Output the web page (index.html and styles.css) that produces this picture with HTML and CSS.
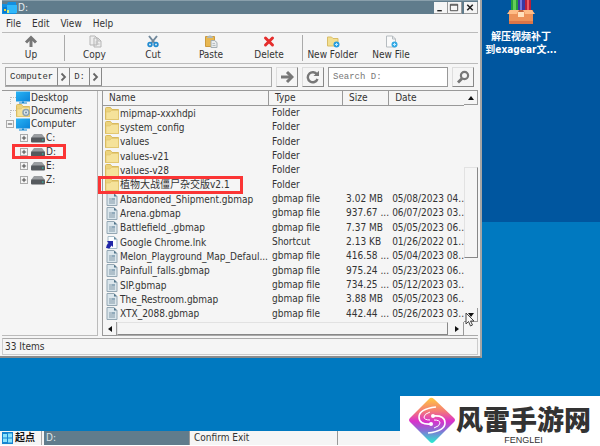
FILE: index.html
```html
<!DOCTYPE html>
<html lang="zh-CN">
<head>
    <meta charset="UTF-8">
    <meta name="viewport" content="width=device-width, initial-scale=1.0">
    <title>D:</title>
    <link rel="stylesheet" href="styles.css">
</head>
<body>
    <!-- shared icons -->
    <svg class="sprite" aria-hidden="true">
        <linearGradient id="screenFill" x1="0" y1="0" x2="1" y2="1">
            <stop offset="0" stop-color="#28b4f5"/><stop offset="1" stop-color="#0a83d8"/>
        </linearGradient>
        <symbol id="folder" viewBox="0 0 14 13">
            <path d="M.5 12.5V1.5q0-1 1-1h4l1.5 2h6.500v10z" fill="#ecd37c" stroke="#d9b95c"/>
            <path d="M1 12.500V5h4l1.500-1.500h7v9z" fill="#f5e29a" stroke="#dfc36b" stroke-width=".6"/>
        </symbol>
        <symbol id="doc" viewBox="0 0 12 13">
            <path d="M1 .5h7l3 3v9H1z" fill="#dbe6ec" stroke="#94a7b3"/>
            <path d="M8 .5v3h3z" fill="#52768a"/>
            <path d="M3 6h3M3 8h6M3 10h6" stroke="#8299a8"/>
            <path d="M6 5h3v2H6z" fill="#90aabb"/>
        </symbol>
        <symbol id="link" viewBox="0 0 12 13">
            <path d="M2 .5h6l3 3v9H2z" fill="#fbfdff" stroke="#a5bac6"/>
            <path d="M8 .5v3h3z" fill="#668b9f"/>
            <path d="M1 5h6v6L5.500 9.500 3.500 12.500 0 12q0-3 2.500-5z" fill="#2226a8"/>
        </symbol>
        <symbol id="screen" viewBox="0 0 14 12">
            <path d="M0 0h14v10H0z" fill="url(#screenFill)"/>
            <path d="M6 10h2v1h3v1H3v-1h3z" fill="#1688d2"/>
        </symbol>
        <symbol id="drive" viewBox="0 0 14 9">
            <path d="M3 0h8l3 4H0z" fill="#9a9da0"/>
            <rect y="3.500" width="14" height="5" rx="1" fill="#55595d"/>
            <path d="M11 6h1.500" stroke="#28d0ba"/>
        </symbol>
    </svg>

    <div class="desktop">
        <main class="window">
            <header class="titlebar">
                <svg class="title-icon" viewBox="0 0 15 12"><path d="M0 2h5l1-2h8v12H0z" fill="#128fe0"/><path d="M5 3h10v8H5z" fill="#30b8fa"/><path d="M1 5h4v6H1z" fill="#087bd0"/><path d="M2 7h2v2H2z" fill="#f3d536"/><path d="M5 8h2v3H5z" fill="#d7ef81"/></svg>
                <span class="title">D:</span>
                <button class="win-btn" aria-label="Minimize"><svg viewBox="0 0 12 12"><path d="M3 9.500h5" stroke="#222" stroke-width="1.500"/></svg></button>
                <button class="win-btn" aria-label="Maximize"><svg viewBox="0 0 12 12"><path d="M2 2.500h8v7H2z M2 3.500h8" fill="none" stroke="#444"/></svg></button>
                <button class="win-btn close" aria-label="Close"><svg viewBox="0 0 12 12"><path d="M3 3l6 6M9 3L3 9" stroke="#222" stroke-width="1.700"/></svg></button>
            </header>

            <nav class="menu">
                <button>File</button>
                <button>Edit</button>
                <button>View</button>
                <button>Help</button>
            </nav>

            <div class="toolbar">
                <button class="tool">
                    <svg viewBox="0 0 14 13"><path d="M7 12V4" stroke="#777" stroke-width="3"/><path d="M2 7.500l5-5 5 5" fill="none" stroke="#777" stroke-width="3"/></svg>
                    Up
                </button>
                <button class="tool split">
                    <svg viewBox="0 0 14 13"><path d="M2 1h5l2 2v7H2zM6 3h4l3 3v6H6z" fill="#eee" stroke="#b5b5b5"/><path d="M10 3v3h3M7.500 7H10M7.500 9h4" fill="none" stroke="#bbb"/></svg>
                    Copy
                </button>
                <button class="tool">
                    <svg viewBox="0 0 14 13"><path d="M3 1l6 7.500M11 1L5 8.500" stroke="#71889b" stroke-width="2"/><circle cx="4" cy="9.500" r="1.800" fill="none" stroke="#228bd0" stroke-width="1.800"/><circle cx="10" cy="9.500" r="1.800" fill="none" stroke="#228bd0" stroke-width="1.800"/></svg>
                    Cut
                </button>
                <button class="tool">
                    <svg viewBox="0 0 14 13"><path d="M1.500 1.500h9v10h-9z" fill="#e8b750" stroke="#cc9a3c"/><path d="M3 3V1.500h1L5 .5h2l1 1h1V3z" fill="#aeb9bd"/><path d="M7 5.500h3.500l2.500 2v5H7z" fill="#e9eced" stroke="#a4afb5"/><path d="M8.500 8.500H11M8.500 10.500h3" stroke="#b6bec2"/></svg>
                    Paste
                </button>
                <button class="tool">
                    <svg viewBox="0 0 14 13"><path d="M3.500 3l7 7M10.500 3l-7 7" stroke="#e52e2d" stroke-width="3" stroke-linecap="round"/></svg>
                    Delete
                </button>
                <button class="tool split">
                    <svg viewBox="0 0 14 13"><path d="M1.500 11V2h4L7 3.500h5V11z" fill="#f2df91" stroke="#d9bd67"/><circle cx="10.500" cy="9.500" r="3" fill="#259ce0"/><path d="M9 9.500h3M10.500 8v3" stroke="#bfeaff"/></svg>
                    New Folder
                </button>
                <button class="tool">
                    <svg viewBox="0 0 14 13"><path d="M2.500 1h6l3 3v8h-9z" fill="#fafafa" stroke="#b6bcc0"/><path d="M8.500 1v3h3" fill="none" stroke="#b6bcc0"/><circle cx="10.500" cy="9.500" r="3" fill="#34a9e4"/><path d="M9 9.500h3M10.500 8v3" stroke="#c5ebff"/></svg>
                    New File
                </button>
            </div>

            <div class="address">
                <div class="path">
                    <button class="crumb">Computer</button>
                    <button class="crumb chevron" aria-label="Computer folders"><svg viewBox="0 0 8 10"><path d="M2 1.500L5.500 5 2 8.500" fill="none" stroke="#666" stroke-width="1.800"/></svg></button>
                    <button class="crumb">D:</button>
                    <button class="crumb chevron" aria-label="D: folders"><svg viewBox="0 0 8 10"><path d="M2 1.500L5.500 5 2 8.500" fill="none" stroke="#666" stroke-width="1.800"/></svg></button>
                </div>
                <button class="square" aria-label="Go"><svg viewBox="0 0 14 14"><path d="M1 7h9" stroke="#777" stroke-width="3"/><path d="M7 2l5 5-5 5" fill="none" stroke="#777" stroke-width="3"/></svg></button>
                <button class="square" aria-label="Refresh"><svg viewBox="0 0 14 14"><path d="M11 4.500A5 5 0 1 0 11.500 9" fill="none" stroke="#777" stroke-width="2.400"/><path d="M7.500 6H13V.8z" fill="#777"/></svg></button>
                <input class="search" type="text" aria-label="Search D:" placeholder="Search D:">
                <button class="square" aria-label="Search"><svg viewBox="0 0 14 14"><circle cx="8.500" cy="5.500" r="3.600" fill="none" stroke="#777" stroke-width="2.200"/><path d="M6 8.500l-4 4" stroke="#777" stroke-width="2.800"/></svg></button>
            </div>

            <div class="panes">
                <ul class="tree">
                    <li class="leaf"><svg class="pic"><use href="#screen"/></svg>Desktop</li>
                    <li class="leaf"><svg class="pic" viewBox="0 0 14 13"><use href="#folder" width="14" height="13"/><circle cx="10" cy="8.500" r="3" fill="#dbe6ed" stroke="#8ba2b3" stroke-width="1.500"/><circle cx="10" cy="8.500" r="1" fill="#708da3"/></svg>Documents</li>
                    <li class="root"><button class="expand" aria-label="Collapse Computer"><svg viewBox="0 0 7 7"><path d="M1 3.500h5" stroke="#333"/></svg></button><svg class="pic"><use href="#screen"/></svg>Computer</li>
                    <li class="sub"><button class="expand" aria-label="Expand C:"><svg viewBox="0 0 7 7"><path d="M1 3.500h5M3.500 1v5" stroke="#333"/></svg></button><svg class="pic"><use href="#drive"/></svg>C:</li>
                    <li class="sub"><button class="expand" aria-label="Expand D:"><svg viewBox="0 0 7 7"><path d="M1 3.500h5M3.500 1v5" stroke="#333"/></svg></button><svg class="pic"><use href="#drive"/></svg>D:<span class="mark mark-drive"></span></li>
                    <li class="sub"><button class="expand" aria-label="Expand E:"><svg viewBox="0 0 7 7"><path d="M1 3.500h5M3.500 1v5" stroke="#333"/></svg></button><svg class="pic"><use href="#drive"/></svg>E:</li>
                    <li class="sub"><button class="expand" aria-label="Expand Z:"><svg viewBox="0 0 7 7"><path d="M1 3.500h5M3.500 1v5" stroke="#333"/></svg></button><svg class="pic"><use href="#drive"/></svg>Z:</li>
                </ul>

                <section class="list">
                    <div class="list-body">
                        <table class="files">
                            <thead>
                                <tr><th class="col-name">Name</th><th class="col-type">Type</th><th class="col-size">Size</th><th>Date</th></tr>
                            </thead>
                            <tbody>
                                <tr><td><svg class="pic"><use href="#folder"/></svg>mipmap-xxxhdpi</td><td>Folder</td><td></td><td></td></tr>
                                <tr><td><svg class="pic"><use href="#folder"/></svg>system_config</td><td>Folder</td><td></td><td></td></tr>
                                <tr><td><svg class="pic"><use href="#folder"/></svg>values</td><td>Folder</td><td></td><td></td></tr>
                                <tr><td><svg class="pic"><use href="#folder"/></svg>values-v21</td><td>Folder</td><td></td><td></td></tr>
                                <tr><td><svg class="pic"><use href="#folder"/></svg>values-v28</td><td>Folder</td><td></td><td></td></tr>
                                <tr><td class="marked"><svg class="pic"><use href="#folder"/></svg>植物大战僵尸杂交版v2.1<span class="mark mark-folder"></span></td><td>Folder</td><td></td><td></td></tr>
                                <tr><td><svg class="pic"><use href="#doc"/></svg>Abandoned_Shipment.gbmap</td><td>gbmap file</td><td>3.02 MB</td><td>05/08/2023 04..</td></tr>
                                <tr><td><svg class="pic"><use href="#doc"/></svg>Arena.gbmap</td><td>gbmap file</td><td>937.67 ...</td><td>06/07/2023 03..</td></tr>
                                <tr><td><svg class="pic"><use href="#doc"/></svg>Battlefield_.gbmap</td><td>gbmap file</td><td>7.37 MB</td><td>05/05/2023 06..</td></tr>
                                <tr><td><svg class="pic"><use href="#link"/></svg>Google Chrome.lnk</td><td>Shortcut</td><td>2.13 KB</td><td>01/26/2022 01..</td></tr>
                                <tr><td><svg class="pic"><use href="#doc"/></svg>Melon_Playground_Map_Defaul...</td><td>gbmap file</td><td>416.58 ...</td><td>05/04/2023 08..</td></tr>
                                <tr><td><svg class="pic"><use href="#doc"/></svg>Painfull_falls.gbmap</td><td>gbmap file</td><td>975.24 ...</td><td>05/23/2023 06..</td></tr>
                                <tr><td><svg class="pic"><use href="#doc"/></svg>SIP.gbmap</td><td>gbmap file</td><td>734.25 ...</td><td>05/12/2023 03..</td></tr>
                                <tr><td><svg class="pic"><use href="#doc"/></svg>The_Restroom.gbmap</td><td>gbmap file</td><td>3.88 MB</td><td>05/05/2023 06..</td></tr>
                                <tr><td><svg class="pic"><use href="#doc"/></svg>XTX_2088.gbmap</td><td>gbmap file</td><td>442.44 ...</td><td>05/26/2023 03..</td></tr>
                            </tbody>
                        </table>
                        <div class="vscroll">
                            <button class="arrow" aria-label="Scroll up"><svg viewBox="0 0 8 8"><path d="M1 6l3-4 3 4z"/></svg></button>
                            <div class="before"></div>
                            <div class="thumb"></div>
                            <div class="after"></div>
                            <button class="arrow" aria-label="Scroll down"><svg viewBox="0 0 8 8"><path d="M1 2h6L4 6z"/></svg></button>
                            <svg class="cursor" viewBox="0 0 10 15"><path d="M1 1v11l2.500-2.500L5.500 14l2-1-2-4H9z" fill="#f8f8f8" stroke="#444"/></svg>
                        </div>
                    </div>
                    <div class="hscroll">
                        <button class="arrow" aria-label="Scroll left"><svg viewBox="0 0 8 8"><path d="M6 1v6L2 4z"/></svg></button>
                        <div class="thumb"></div>
                        <button class="arrow" aria-label="Scroll right"><svg viewBox="0 0 8 8"><path d="M2 1v6l4-3z"/></svg></button>
                    </div>
                </section>
            </div>

            <footer class="status">33 Items</footer>
        </main>

        <a class="shortcut" href="#">
            <svg viewBox="0 0 28 25">
                <path d="M4 0h7v12H4z" fill="#279d38"/><path d="M6 0h3v12H6z" fill="#63ce59"/>
                <path d="M11 0h7v12h-7z" fill="#3938a4"/><path d="M13 0h2v12h-2z" fill="#7179dc"/>
                <path d="M18 0h6v12h-6z" fill="#b91e39"/><path d="M20 0h2v12h-2z" fill="#ed5964"/>
                <path d="M2 10h24v14H2z" fill="#ed9259"/><path d="M2 10h24v3H2z" fill="#c7653b"/>
                <path d="M3 10h9l-2 4H0zM25 10h-9l2 4h10z" fill="#ffbc86"/>
                <path d="M11 12h6v5h-6z" fill="#ffe1bd"/><path d="M2 21h24v3H2z" fill="#dc7547"/>
            </svg>
            <span>解压视频补丁<br>到exagear文...</span>
        </a>
    </div>

    <div class="bottom">
        <footer class="taskbar">
            <button class="start">
                <svg viewBox="0 0 11 12"><path d="M0 0h11v12H0z" fill="#1684d0"/><path d="M1 2h4v3.500H1zM6 1.500h4v4H6zM1 6.500h4V10H1zM6 6.500h4v4H6z" fill="#8be2fb"/></svg>
                起点
            </button>
            <button class="task active">D:</button>
            <button class="task">Confirm Exit</button>
        </footer>
        <div class="brand">
            <svg viewBox="0 0 46 46">
                <linearGradient id="brandFill" x1="0" y1="0" x2="0" y2="1">
                    <stop offset="0" stop-color="#ffcb3e"/><stop offset=".3" stop-color="#f47a78"/><stop offset=".52" stop-color="#da30cb"/><stop offset=".72" stop-color="#886ed5"/><stop offset="1" stop-color="#25efd0"/>
                </linearGradient>
                <path d="M21 1q2-1 4 1l20 19q2 2 0 4L25 45q-2 2-4 0L1 25q-2-2 0-4z" fill="url(#brandFill)"/>
                <path d="M27 10Q10 12 10 20q0 8 12 7M19 36q17-2 17-10 0-8-12-7" fill="none" stroke="#fff" stroke-width="1.600"/>
                <path d="M21 15q-6 2-6 5 0 3 6 3M25 31q6-2 6-5 0-3-6-3" fill="none" stroke="#fff"/>
                <circle cx="22" cy="27" r="2" fill="#fff"/><circle cx="24" cy="19" r="2" fill="#fff"/>
            </svg>
            <div class="brand-text">
                <strong>风雷手游网</strong>
                <span>FENGLEI</span>
            </div>
        </div>
    </div>
</body>
</html>
```

FILE: styles.css
```css
* {
    box-sizing: border-box;
}

body {
    margin: 0;
    min-height: 100vh;
    display: flex;
    flex-direction: column;
    justify-content: space-between;
    background: linear-gradient(#00569f 222px, #0079c0 222px);
    color: #333;
    font: 10px/12px "DejaVu Sans Condensed", "DejaVu Sans", "Noto Sans CJK SC", sans-serif;
    overflow: hidden;
}

button {
    margin: 0;
    padding: 0;
    border: none;
    background: none;
    color: inherit;
    font: inherit;
}

svg {
    display: block;
    flex: none;
}

.sprite {
    position: absolute;
    width: 0;
    height: 0;
}

.desktop {
    display: flex;
    align-items: flex-start;
}

/* file manager window */
.window {
    flex: 1;
    min-width: 0;
    padding: 0 2px 1px;
    background: #f5f5f5;
    border-right: 2px solid #a5a5a5;
    border-bottom: 2px solid #8b8b8b;
}

.titlebar {
    display: flex;
    align-items: center;
    height: 14px;
    background: #607c8c;
    border-top: 1px solid #8aa0ac;
    color: #e6edf0;
}

.title-icon {
    width: 15px;
    height: 12px;
}

.title {
    flex: 1;
    padding-left: 1px;
}

.win-btn {
    width: 14px;
    height: 12px;
    background: #f5f5f5;
    border-right: 1px solid #999;
    border-bottom: 1px solid #999;
}

.win-btn svg {
    width: 12px;
    height: 11px;
}

.close {
    margin-left: 2px;
}

.menu {
    display: flex;
    gap: 11px;
    height: 19px;
    padding: 2px 4px 0;
    border-bottom: 1px solid #bbb;
}

.toolbar {
    display: flex;
    height: 31px;
    padding: 2px 0;
    border-bottom: 1px solid #bbb;
}

.tool {
    display: flex;
    flex-direction: column;
    align-items: center;
    gap: 1px;
    width: 58px;
    white-space: nowrap;
}

.tool svg {
    width: 14px;
    height: 13px;
}

.split {
    width: 60px;
    margin-left: 4px;
    border-left: 1px solid #aaa;
}

.address {
    display: flex;
    gap: 4px;
    height: 27px;
    padding: 3px 4px 3px 3px;
    border-bottom: 1px solid #999;
}

.path {
    display: flex;
    flex: 1;
    border: 1px solid #aaa;
}

.crumb, .search {
    font: 9px/12px "Liberation Mono", monospace;
}

.crumb {
    display: flex;
    align-items: center;
    padding: 0 4px;
    border-right: 1px solid #888;
    border-bottom: 1px solid #999;
}

.chevron {
    padding: 0 1px;
}

.chevron svg {
    width: 9px;
    height: 10px;
}

.square {
    display: flex;
    align-items: center;
    justify-content: center;
    width: 22px;
    border: 1px solid #ddd;
    border-right: 1px solid #888;
    border-bottom: 1px solid #888;
}

.square svg {
    width: 14px;
    height: 14px;
}

.search {
    width: 120px;
    padding: 0 4px;
    background: #fff;
    border: 1px solid #999;
    border-radius: 0;
}

.search::placeholder {
    color: #777;
    opacity: 1;
}

/* tree and file list */
.panes {
    display: flex;
    gap: 4px;
    height: 245px;
}

.tree {
    width: 96px;
    margin: 0;
    padding: 0;
    list-style: none;
    border-right: 1px solid #bbb;
    border-bottom: 1px solid #bbb;
}

.tree li {
    position: relative;
    display: flex;
    align-items: center;
    gap: 1px;
    height: 14px;
    padding-left: 14px;
}

.tree .leaf {
    height: 13px;
}

/* branch line down to Computer */
.leaf::before {
    content: "";
    position: absolute;
    inset: 6px auto 0 8px;
    width: 5px;
    border-top: 1px dotted #bbb;
    border-left: 1px dotted #bbb;
}

.tree .root {
    padding-left: 4px;
}

.tree .sub {
    padding-left: 18px;
}

.expand {
    width: 8px;
    height: 8px;
    border: 1px solid #aaa;
    margin-right: 1px;
}

.sub .expand {
    margin-right: 2px;
}

.expand svg {
    width: 6px;
    height: 6px;
}

.pic {
    width: 14px;
    height: 13px;
}

.sub .pic {
    height: 9px;
}

.mark {
    position: absolute;
    border: 3px solid #fb3535;
}

.mark-drive {
    inset: -1px 31px 0 10px;
}

.mark-folder {
    inset: -2px 26px -2px -5px;
}

.list {
    flex: 1;
    min-width: 0;
    display: flex;
    flex-direction: column;
    border-left: 1px solid #999;
}

.list-body {
    display: flex;
    flex: 1;
}

.files {
    flex: 1;
    height: 230px;
    table-layout: fixed;
    border-collapse: separate;
    border-spacing: 0;
    white-space: nowrap;
}

.files th, .files td {
    padding: 0 0 0 3px;
    text-align: left;
    font-weight: normal;
    overflow: hidden;
    line-height: 12px;
}

.files th {
    height: 15px;
    padding-left: 6px;
    border-right: 1px solid #999;
    border-bottom: 1px solid #999;
}

.files th:last-child {
    border-right: none;
}

.files .col-name {
    width: 166px;
}

.files .col-type {
    width: 75px;
}

.files .col-size {
    width: 46px;
}

.files td:first-child {
    padding-left: 2px;
}

.files td .pic {
    display: inline-block;
    margin-right: 1px;
    vertical-align: middle;
}

.files .marked {
    position: relative;
    overflow: visible;
}

.vscroll {
    position: relative;
    display: flex;
    flex-direction: column;
    width: 14px;
}

.arrow {
    display: flex;
    align-items: center;
    justify-content: center;
    width: 14px;
    height: 14px;
    border-right: 1px solid #999;
    border-bottom: 1px solid #999;
}

.arrow svg {
    width: 8px;
    height: 8px;
    fill: #111;
}

.before {
    flex: 63;
}

.after {
    flex: 51;
}

.thumb {
    border: 1px solid #e2e2e2;
    border-right: 1px solid #888;
    border-bottom: 1px solid #888;
}

.vscroll .thumb {
    flex: 90;
}

.cursor {
    position: absolute;
    left: 1px;
    bottom: -5px;
    width: 10px;
    height: 15px;
}

.hscroll {
    display: flex;
    height: 14px;
    padding-right: 14px;
    border-bottom: 1px solid #aaa;
}

.hscroll .thumb {
    flex: 1;
    margin-right: 2px;
}

.status {
    height: 17px;
    margin-top: 2px;
    padding: 2px;
    border: 1px solid #ccc;
    border-top: 1px solid #aaa;
}

/* desktop shortcut */
.shortcut {
    display: flex;
    flex-direction: column;
    align-items: center;
    gap: 5px;
    width: 118px;
    padding-right: 42px;
    padding-left: 2px;
    color: #fff;
    font: bold 10px/13px "DejaVu Sans Condensed", "Noto Sans CJK SC", sans-serif;
    text-align: center;
    text-decoration: none;
    white-space: nowrap;
}

.shortcut svg {
    width: 28px;
    height: 25px;
}

/* taskbar and site mark */
.bottom {
    display: flex;
    align-items: flex-end;
    padding-bottom: 1px;
    background: linear-gradient(to top, #fff 1px, transparent 1px);
}

.taskbar {
    display: flex;
    flex: 1;
    gap: 2px;
    height: 14px;
    background: #f5f5f5;
}

.start {
    display: flex;
    align-items: center;
    gap: 2px;
    width: 42px;
    padding-left: 2px;
    border-right: 1px solid #aaa;
    color: #111;
    font-weight: bold;
}

.start svg {
    width: 11px;
    height: 12px;
}

.task {
    width: 146px;
    padding-left: 2px;
    border-right: 1px solid #999;
    text-align: left;
}

.active {
    background: #607c8c;
    color: #dce5e9;
}

.brand {
    display: flex;
    width: 200px;
    height: 49px;
    padding-left: 9px;
    background: #fff;
    color: #333;
}

.brand svg {
    width: 46px;
    height: 48px;
}

.brand-text {
    display: flex;
    flex-direction: column;
    align-items: center;
    gap: 2px;
    padding: 7px 0 0 1px;
}

.brand-text strong {
    font: 900 27px/31px "Noto Sans CJK SC", sans-serif;
}

.brand-text span {
    font: 9px/9px "Liberation Sans", sans-serif;
}
```
